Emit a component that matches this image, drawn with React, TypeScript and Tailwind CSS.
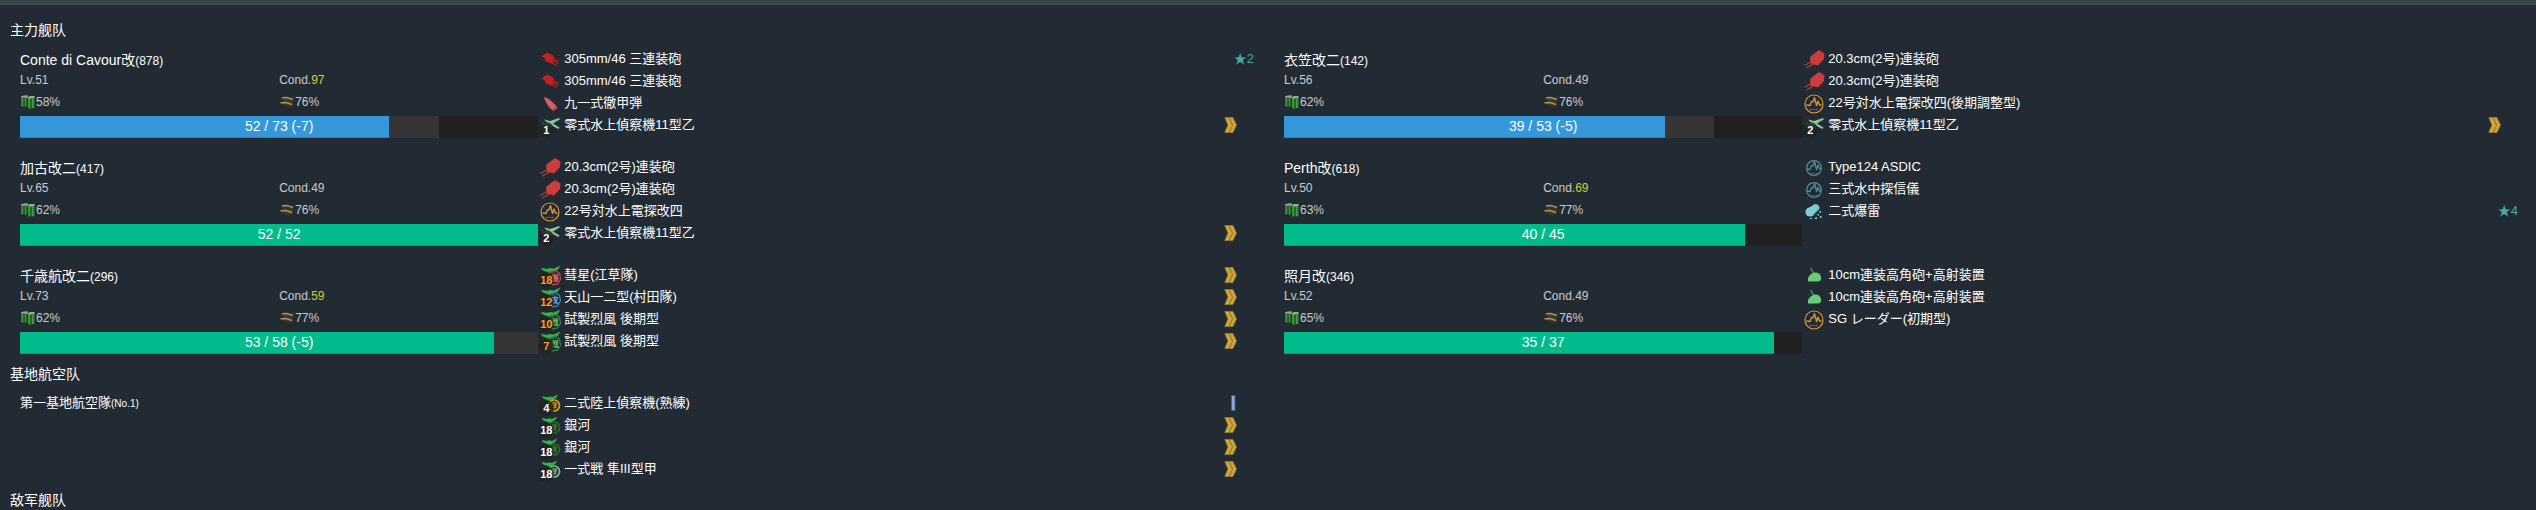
import React from 'react';

type IconKind =
  | 'largeGun' | 'mediumGun' | 'shell' | 'seaplane' | 'radar' | 'sonar' | 'depthCharge' | 'highAngle'
  | 'bomber' | 'torpedo' | 'fighter' | 'landRecon' | 'landBomber' | 'landFighter';

type Item = {
  icon: IconKind;
  name: string;
  count?: number;
  hot?: boolean;
  prof?: 'max' | 'low';
  stars?: number;
};

type Ship = {
  name: string;
  id: number;
  lv: number;
  cond: number;
  fuel: number;
  ammo: number;
  hp: number;
  max: number;
  lost: number;
  tone: string;
  items: Item[];
};

const BLUE = 'bg-[#3498db]';
const GREEN = 'bg-[#00bc8c]';

const ships: Ship[] = [
  {
    name: 'Conte di Cavour改', id: 878, lv: 51, cond: 97, fuel: 58, ammo: 76, hp: 52, max: 73, lost: 7, tone: BLUE,
    items: [
      { icon: 'largeGun', name: '305mm/46 三連装砲', stars: 2 },
      { icon: 'largeGun', name: '305mm/46 三連装砲' },
      { icon: 'shell', name: '九一式徹甲弾' },
      { icon: 'seaplane', name: '零式水上偵察機11型乙', count: 1, prof: 'max' },
    ],
  },
  {
    name: '衣笠改二', id: 142, lv: 56, cond: 49, fuel: 62, ammo: 76, hp: 39, max: 53, lost: 5, tone: BLUE,
    items: [
      { icon: 'mediumGun', name: '20.3cm(2号)連装砲' },
      { icon: 'mediumGun', name: '20.3cm(2号)連装砲' },
      { icon: 'radar', name: '22号対水上電探改四(後期調整型)' },
      { icon: 'seaplane', name: '零式水上偵察機11型乙', count: 2, prof: 'max' },
    ],
  },
  {
    name: '加古改二', id: 417, lv: 65, cond: 49, fuel: 62, ammo: 76, hp: 52, max: 52, lost: 0, tone: GREEN,
    items: [
      { icon: 'mediumGun', name: '20.3cm(2号)連装砲' },
      { icon: 'mediumGun', name: '20.3cm(2号)連装砲' },
      { icon: 'radar', name: '22号対水上電探改四' },
      { icon: 'seaplane', name: '零式水上偵察機11型乙', count: 2, prof: 'max' },
    ],
  },
  {
    name: 'Perth改', id: 618, lv: 50, cond: 69, fuel: 63, ammo: 77, hp: 40, max: 45, lost: 0, tone: GREEN,
    items: [
      { icon: 'sonar', name: 'Type124 ASDIC' },
      { icon: 'sonar', name: '三式水中探信儀' },
      { icon: 'depthCharge', name: '二式爆雷', stars: 4 },
    ],
  },
  {
    name: '千歳航改二', id: 296, lv: 73, cond: 59, fuel: 62, ammo: 77, hp: 53, max: 58, lost: 5, tone: GREEN,
    items: [
      { icon: 'bomber', name: '彗星(江草隊)', count: 18, hot: true, prof: 'max' },
      { icon: 'torpedo', name: '天山一二型(村田隊)', count: 12, hot: true, prof: 'max' },
      { icon: 'fighter', name: '試製烈風 後期型', count: 10, hot: true, prof: 'max' },
      { icon: 'fighter', name: '試製烈風 後期型', count: 7, hot: true, prof: 'max' },
    ],
  },
  {
    name: '照月改', id: 346, lv: 52, cond: 49, fuel: 65, ammo: 76, hp: 35, max: 37, lost: 0, tone: GREEN,
    items: [
      { icon: 'highAngle', name: '10cm連装高角砲+高射装置' },
      { icon: 'highAngle', name: '10cm連装高角砲+高射装置' },
      { icon: 'radar', name: 'SG レーダー(初期型)' },
    ],
  },
];

const squadron: Item[] = [
  { icon: 'landRecon', name: '二式陸上偵察機(熟練)', count: 4, prof: 'low' },
  { icon: 'landBomber', name: '銀河', count: 18, prof: 'max' },
  { icon: 'landBomber', name: '銀河', count: 18, prof: 'max' },
  { icon: 'landFighter', name: '一式戦 隼III型甲', count: 18, prof: 'max' },
];

function Wave({ color, r }: { color: string; r: number }) {
  return (
    <g fill="none" stroke={color}>
      <circle cx="10" cy="11" r={r} strokeWidth="1.2" />
      <path d="M2.5 12 L6 12.5 L7.5 8.5 L9 9 L10.5 4.5 L12.5 12.5 L14 8 L15.5 12 L17.5 12" strokeWidth="1.3" strokeLinejoin="round" />
      <path d="M5.5 16.5 H14.5" strokeWidth="0.7" strokeDasharray="2 1" />
    </g>
  );
}

function Wings() {
  return (
    <path
      d="M1 3 C4 2.5 6 4.5 8 3.5 Q10.5 2.4 12.5 3.5 C14.5 4.2 17 1.5 20 0.8 C19.2 3.5 17 6 14 6.8 L14.5 8.5 H7 L7.5 6.8 C4.5 6.5 2 5.5 1 3 Z"
      fill="#33b44a"
    />
  );
}

function KanjiMark({ glyph, ring, ink }: { glyph: string; ring: string; ink: string }) {
  return (
    <g>
      <path d="M10 7 L15 5.5 L19.5 8.5 L20.5 14 L17.5 19 L12 20 L8.5 16 Z" fill="#222b33" fillOpacity="0.6" stroke={ring} strokeWidth="1.3" />
      <text x="14.5" y="16" fontSize="8" fontWeight="700" textAnchor="middle" fill={ink}>{glyph}</text>
    </g>
  );
}

function RoundMark({ ring, ink }: { ring: string; ink: string }) {
  return (
    <g fill="none">
      <circle cx="14" cy="12.5" r="5.5" stroke={ring} strokeWidth="1.7" fill="#222b33" fillOpacity="0.5" />
      <path d="M12 10 h4 v2.2 h-4 z M11.5 14.2 h5 M14 14 v2" stroke={ink} strokeWidth="1.2" />
    </g>
  );
}

function ItemIcon({ kind }: { kind: IconKind }) {
  let art: React.ReactNode = null;
  switch (kind) {
    case 'largeGun':
      art = (
        <g>
          <path d="M1.500 7.500 L7 3.500 L13 6.500 L15.500 11 L12.500 15 L6 12.500 L4.500 9 Z" fill="#c4211f" />
          <path d="M13 9.500 L19 12.500 M12.500 11.500 L18.500 14.500 M11.500 13.500 L17 16.500" stroke="#8c2226" strokeWidth="1.700" />
        </g>
      );
      break;
    case 'mediumGun':
      art = (
        <g>
          <path d="M6 8 L11.500 3.500 L15 1 L20.500 4.500 L20 10 L14 16.500 L6.500 14.500 Z" fill="#cc3d3d" />
          <path d="M7.500 12.500 L0.500 16.500 M10 14.500 L2.500 19" stroke="#b53a3c" strokeWidth="1.300" />
        </g>
      );
      break;
    case 'shell':
      art = (
        <g>
          <path d="M4 4 C8 5 14 9 17.500 15 L13.500 18 C9 15 5.500 10 4 4 Z" fill="#d35f5f" />
          <path d="M13 17 L16.500 14" stroke="#a34a4e" strokeWidth="1.200" />
        </g>
      );
      break;
    case 'seaplane':
      art = (
        <g>
          <path d="M4 4.500 L10 6 L19 3 L20 4.300 L13 8.500 L19.500 12.500 L18.500 14 L10 9.800 L0 10.500 L7 7.500 Z" fill="#8fc79a" />
          <path d="M2 8 L12 12" stroke="#5f8f6e" strokeWidth="1.500" />
        </g>
      );
      break;
    case 'radar':
      art = <Wave color="#e0962e" r={9} />;
      break;
    case 'sonar':
      art = <Wave color="#4c8f98" r={7.4} />;
      break;
    case 'depthCharge':
      art = (
        <g fill="#7fccd8">
          <path d="M3 8 L11 3 Q15.500 3 15.500 8 L9 14.500 Z" />
          <circle cx="6" cy="11" r="4.600" />
          <path d="M9 14 L14.800 7.500" stroke="#4f95a3" strokeWidth="0.800" />
          <path d="M15.500 10 h1.500 v2 h-1.500z M13.500 13 h1.500 v1.500 h-1.500z M16 15 h1.500 v2 h-1.500z M11 16.500 h2 v1.500 h-2z M6 17 h2 v1 h-2z" />
        </g>
      );
      break;
    case 'highAngle':
      art = (
        <g>
          <path d="M6.500 3 L10 9" stroke="#3f7b52" strokeWidth="1.800" />
          <path d="M4 16.500 V13 Q7 7.500 12 7.500 Q16.500 8 17 12 V15 L14.500 16.500 Z" fill="#66cc77" />
        </g>
      );
      break;
    case 'bomber':
      art = <g><Wings /><KanjiMark glyph="爆" ring="#c04a50" ink="#f06a6a" /></g>;
      break;
    case 'torpedo':
      art = <g><Wings /><KanjiMark glyph="攻" ring="#3f7fb8" ink="#5fb4f0" /></g>;
      break;
    case 'fighter':
      art = <g><Wings /><KanjiMark glyph="戦" ring="#2f8a45" ink="#66cc77" /></g>;
      break;
    case 'landRecon':
      art = <g><g transform="translate(1 1) scale(.84)"><Wings /></g><RoundMark ring="#d9a016" ink="#f0b41c" /></g>;
      break;
    case 'landBomber':
      art = <g><g transform="translate(1 1) scale(.8)"><Wings /></g><RoundMark ring="#2c6e24" ink="#3c9a2c" /></g>;
      break;
    case 'landFighter':
      art = <g><g transform="translate(1 1) scale(.8)"><Wings /></g><RoundMark ring="#7fb893" ink="#8fd0a4" /></g>;
      break;
  }
  return (
    <svg viewBox="0 0 21 21" className="block size-[21px]" aria-hidden="true">
      {art}
    </svg>
  );
}

function Proficiency({ level }: { level: 'max' | 'low' }) {
  return (
    <svg viewBox="0 0 20 20" className="size-5" aria-hidden="true">
      {level === 'max' ? (
        <g fill="#d6a52c" stroke="#9a8548" strokeWidth="0.7">
          <path d="M4.800 2.500 H8.800 L12.300 10 L8.800 17.500 H4.800 L8 10 Z" />
          <path d="M9.300 2.500 H12.800 L16.500 10 L12.800 17.500 H9.300 L12.800 10 Z" />
        </g>
      ) : (
        <rect x="11.5" y="2.500" width="3.500" height="15" rx="0.5" fill="#86a9d6" stroke="#4a6484" strokeWidth="0.8" />
      )}
    </svg>
  );
}

function Drums() {
  return (
    <svg viewBox="0 0 16 16" className="size-4" aria-hidden="true">
      <path d="M1 2 L7.500 1.500 V12.500 H1 Z" fill="#2a7a2c" />
      <path d="M7.500 3 L14.500 2.500 V14 L8 14.500 Z" fill="#2f8a30" />
      <path d="M1 2.500 L4 1.500 H8 V3.500 H1 Z M7.500 3.500 L10 2 H14.500 V4 L8 4.500 Z" fill="#9aa99a" />
      <path d="M2.500 4 V12 M5.500 4 V12.500 M9.500 5 V14 M12.500 5 V14" stroke="#5f9c5c" strokeWidth="0.700" />
      <path d="M7 3.500 V13 M11 5 V14 M4 4 V12.500" stroke="#17461b" strokeWidth="1" />
    </svg>
  );
}

function Ammo() {
  return (
    <svg viewBox="0 0 16 16" className="size-4" aria-hidden="true">
      <path d="M2 4.500 L13 4.500 L14.500 8 L13 12.500 L9 13.500 L1 9.500 L6 8 Z" fill="#3b3524" />
      <path d="M3 3.800 L8 3.500 L14 5.500" stroke="#a8945c" strokeWidth="1.600" fill="none" />
      <path d="M1.500 8.800 L7 8.500 L13 10.500" stroke="#a8945c" strokeWidth="1.600" fill="none" />
    </svg>
  );
}

function ItemRow({ item }: { item: Item }) {
  return (
    <li className="flex h-[22px] items-center pl-0.5 text-[13px] leading-[22px]">
      <span className="relative mr-[3px] shrink-0">
        <ItemIcon kind={item.icon} />
        {item.count !== undefined && (
          <span
            className={`absolute -bottom-0.5 -left-0.5 flex size-4 items-center justify-center rounded-full bg-[#222222]/80 text-[11px] leading-4 font-bold ${item.hot ? 'text-[#ff9a1a]' : 'text-white'}`}
          >
            {item.count}
          </span>
        )}
      </span>
      <span className="flex-1 truncate">{item.name}</span>
      {item.prof && <span className="mr-3.5"><Proficiency level={item.prof} /></span>}
      {item.stars && <span className="text-[#45a9a5]">★{item.stars}</span>}
    </li>
  );
}

function HpBar({ ship }: { ship: Ship }) {
  const pct = (n: number) => `${(n / ship.max) * 100}%`;
  return (
    <div className="relative flex h-[22px] bg-[#202020]">
      <div className={`${ship.tone} shadow-[inset_0_-1px_0_rgba(0,0,0,0.15)]`} style={{ width: pct(ship.hp) }} />
      <div className="bg-[#353535]" style={{ width: pct(ship.lost) }} />
      <span className="absolute inset-0 text-center text-sm leading-5">
        {ship.hp} / {ship.max}{ship.lost > 0 ? ` (-${ship.lost})` : ''}
      </span>
    </div>
  );
}

function ShipCard({ ship }: { ship: Ship }) {
  return (
    <article className="flex pr-3.5 pl-4">
      <div className="w-[42%]">
        <h3 className="h-6 text-sm leading-6">
          {ship.name}<span className="text-xs">({ship.id})</span>
        </h3>
        <div className="grid grid-cols-2 text-xs text-[#c8cbce]">
          <span className="h-4 leading-4">Lv.{ship.lv}</span>
          <span className="h-4 leading-4">
            Cond.<span className={ship.cond > 49 ? 'text-[#cfcf3a]' : ''}>{ship.cond}</span>
          </span>
          <span className="flex h-7 items-center"><Drums />{ship.fuel}%</span>
          <span className="flex h-7 items-center"><Ammo />{ship.ammo}%</span>
        </div>
        <HpBar ship={ship} />
      </div>
      <ul className="flex-1">
        {ship.items.map((item, i) => <ItemRow key={i} item={item} />)}
      </ul>
    </article>
  );
}

export default function App() {
  return (
    <div lang="ja" className="h-screen overflow-hidden bg-[#222b33] font-['Liberation_Sans','Noto_Sans_CJK_JP',sans-serif] text-white">
      <div className="h-[5px] border-b border-[#465054] bg-[#39444a]" />
      <main className="px-1 pt-[15px]">
        <section>
          <h2 lang="zh-CN" className="pl-1.5 text-sm leading-5">主力舰队</h2>
          <div className="mt-2 grid grid-cols-2 gap-y-[18px]">
            {ships.map((ship) => <ShipCard key={ship.id} ship={ship} />)}
          </div>
        </section>
        <section className="mt-2.5">
          <h2 lang="zh-CN" className="pl-1.5 text-sm leading-5">基地航空队</h2>
          <div className="mt-2 grid grid-cols-2">
            <article className="flex pr-3.5 pl-4">
              <h3 className="w-[42%] text-[13px] leading-[22px]">
                第一基地航空隊<span className="text-[10px]">(No.1)</span>
              </h3>
              <ul className="flex-1">
                {squadron.map((item, i) => <ItemRow key={i} item={item} />)}
              </ul>
            </article>
          </div>
        </section>
        <section className="mt-2.5">
          <h2 lang="zh-CN" className="pl-1.5 text-sm leading-5">敌军舰队</h2>
        </section>
      </main>
    </div>
  );
}
